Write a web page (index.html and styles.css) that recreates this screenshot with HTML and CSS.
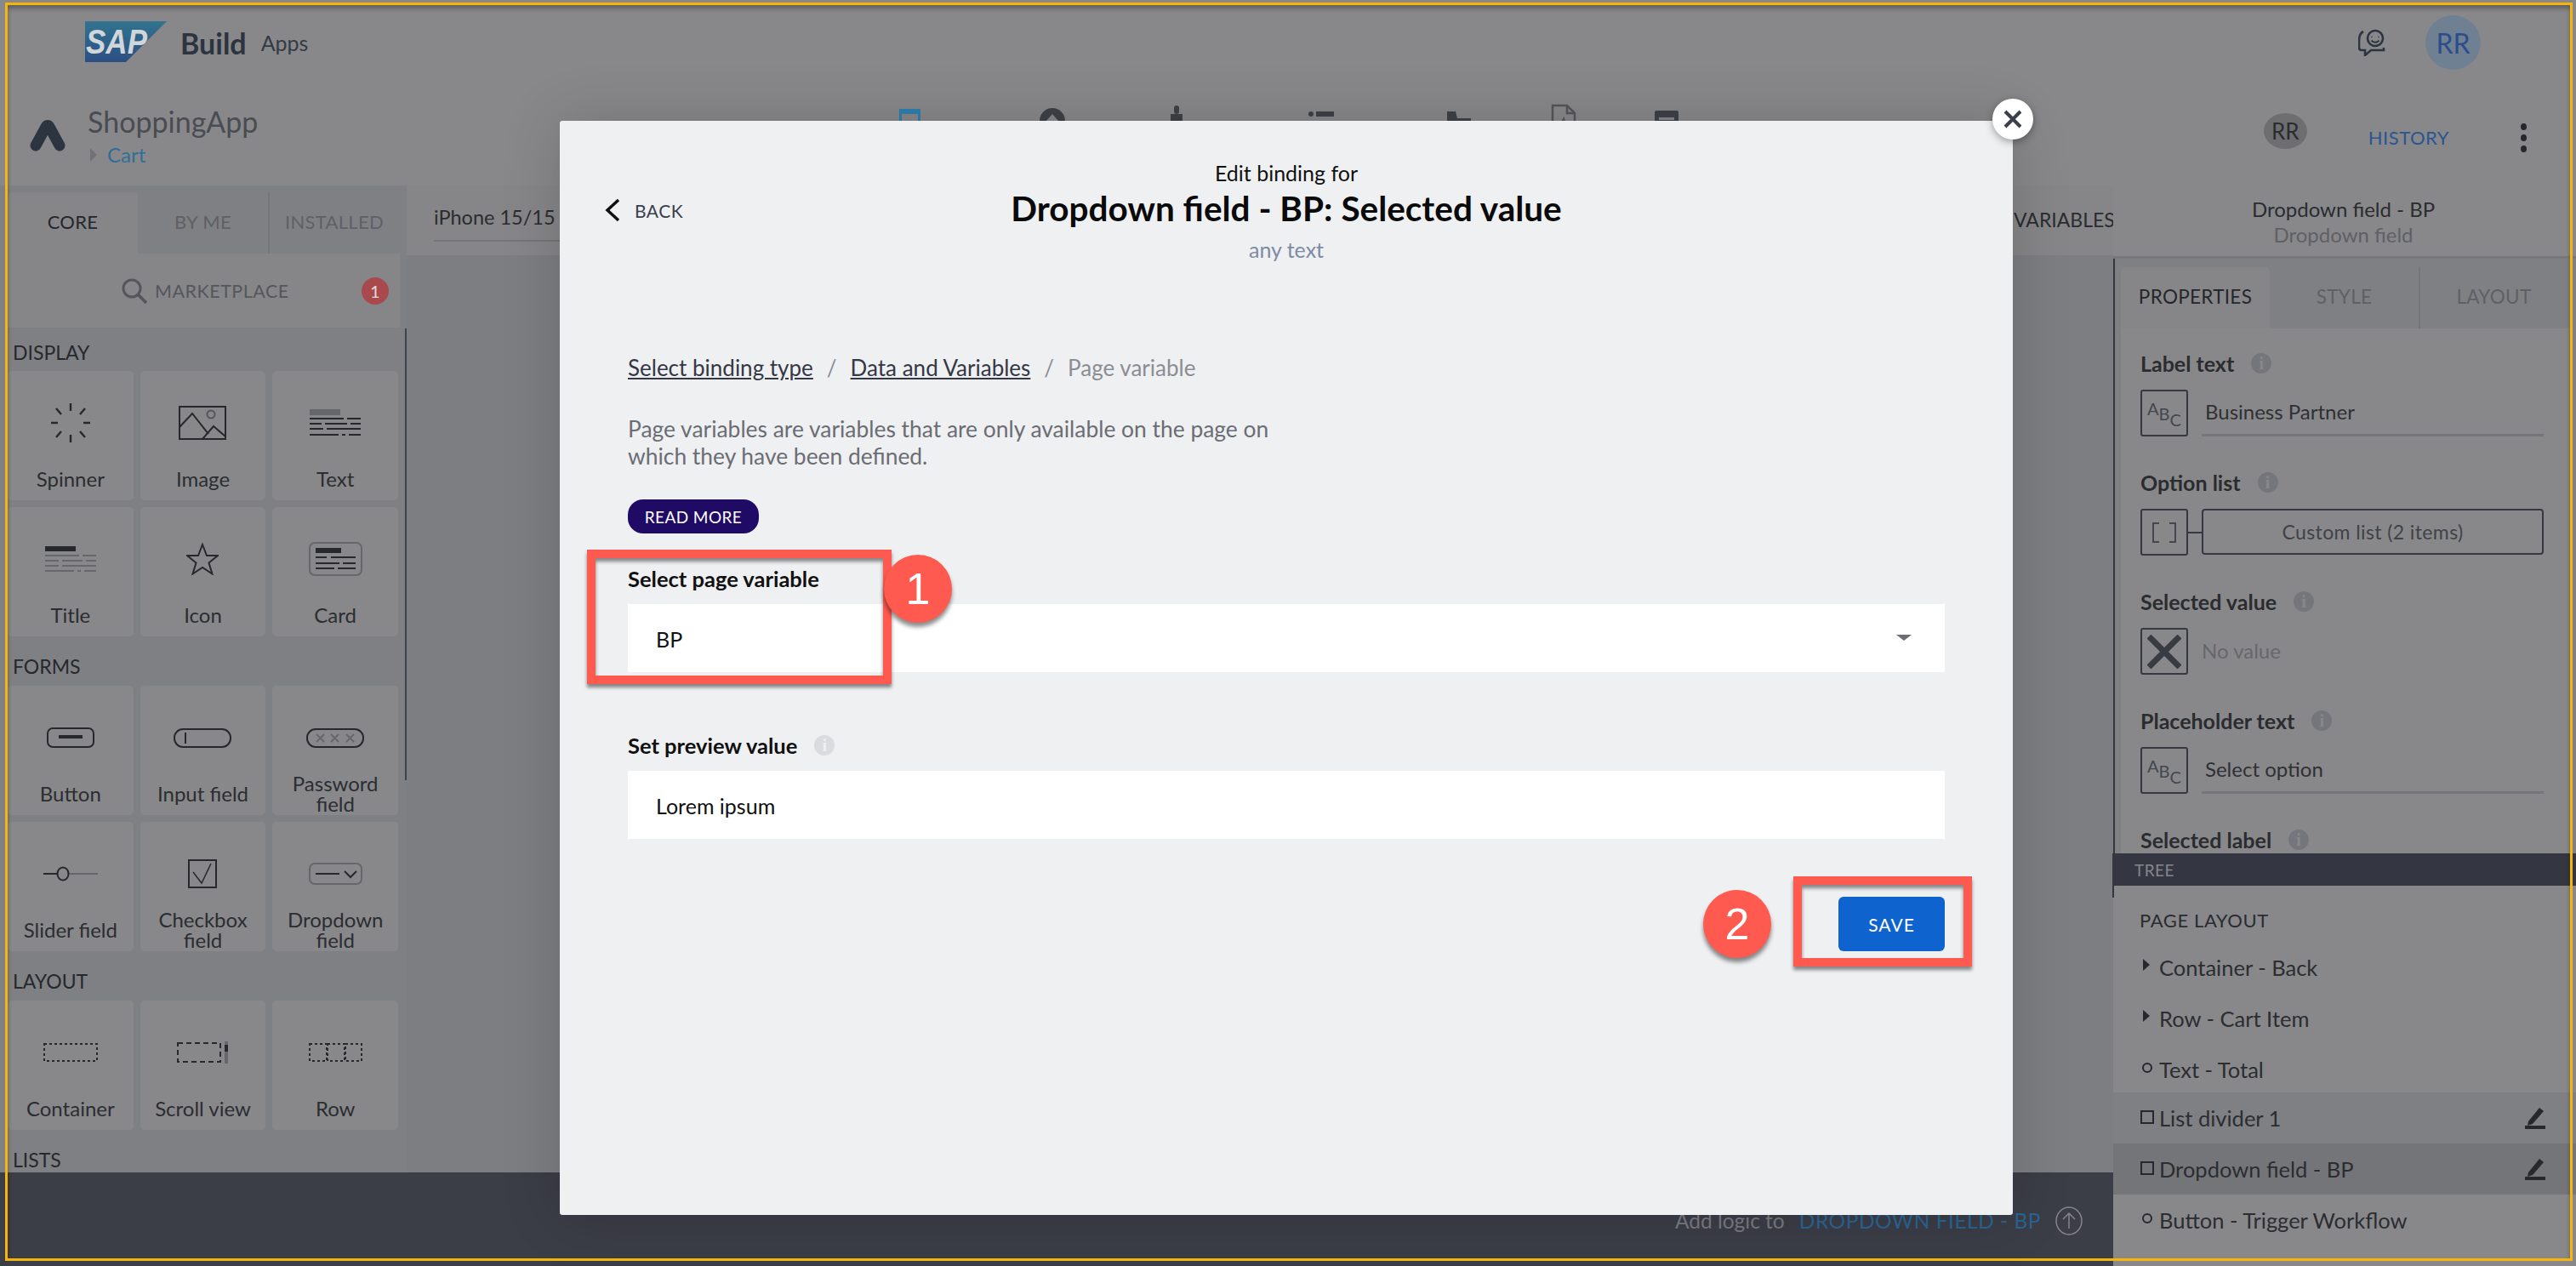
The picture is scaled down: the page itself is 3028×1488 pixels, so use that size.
FILE: index.html
```html
<!DOCTYPE html>
<html lang="en">
<head>
  <meta charset="UTF-8">
  <title>SAP Build Apps</title>
  <link rel="stylesheet" href="styles.css">
</head>
<body>
<div class="page">

  <!-- top bar -->
  <header class="topbar">
    <svg class="sap-logo" width="96" height="48" viewBox="0 0 96 48">
      <defs>
        <linearGradient id="sapGrad" x1="0" y1="0" x2="0" y2="1">
          <stop offset="0" stop-color="#31748f"/>
          <stop offset="1" stop-color="#2c4f83"/>
        </linearGradient>
      </defs>
      <polygon points="0,0 96,0 48,48 0,48" fill="url(#sapGrad)"/>
      <text x="1" y="38" class="sap-text" textLength="72" lengthAdjust="spacingAndGlyphs">SAP</text>
    </svg>
    <span class="build">Build</span>
    <span class="apps">Apps</span>
    <svg class="feedback" width="32" height="32" viewBox="0 0 32 32" fill="none" stroke="#2b3440" stroke-width="2.6">
      <circle cx="20" cy="11" r="9"/>
      <path d="M15.5 9.5h1M23.5 9.5h1M15.5 13.5c2 3 7 3 9 0" stroke-width="2"/>
      <path d="M6 3C2 5 1 8 1 14v8c0 2 1 3 3 3h4v6l7-6h15v-3"/>
    </svg>
    <div class="avatar-main">RR</div>
  </header>

  <!-- app row -->
  <div class="approw">
    <div class="brand">
      <svg width="44" height="38" viewBox="0 0 44 38" fill="none" stroke="#2b343f" stroke-width="13" stroke-linecap="round" stroke-linejoin="round">
        <path d="M8 31L20 9Q22 6 24 9L36 31"/>
      </svg>
      <div class="brand-text">
        <div class="app-name">ShoppingApp</div>
        <div class="app-page"><span class="page-arrow"></span>Cart</div>
      </div>
    </div>
    <div class="tools">
      <svg width="25" height="30" viewBox="0 0 25 30"><rect x="1.5" y="1.5" width="22" height="27" fill="none" stroke="#2f7fae" stroke-width="3"/><rect x="1" y="1" width="23" height="5" fill="#2f7fae"/><path d="M9 14h3v3H9zM14 14h3v3h-3z" fill="#2f7fae"/></svg>
      <svg width="30" height="32" viewBox="0 0 30 32"><circle cx="15" cy="16" r="15" fill="#3e4146"/><path d="M15 8l8 9h-5v7h-6v-7H7z" fill="#88888a"/></svg>
      <svg width="16" height="34" viewBox="0 0 16 34" fill="#3e4146"><rect x="5" y="0" width="6" height="10" rx="3"/><rect x="1" y="10" width="14" height="8"/><rect x="5" y="18" width="2" height="16"/><rect x="9" y="18" width="2" height="16"/></svg>
      <svg width="30" height="28" viewBox="0 0 30 28" fill="#3e4146"><circle cx="3" cy="4" r="3"/><rect x="9" y="1" width="21" height="6"/><circle cx="3" cy="15" r="3"/><rect x="9" y="12" width="21" height="6"/></svg>
      <svg width="30" height="28" viewBox="0 0 30 28" fill="#3e4146"><path d="M1 1h10l2 8h16v3H1zM1 15h29v13H1z"/></svg>
      <svg width="30" height="36" viewBox="0 0 30 36" fill="none" stroke="#55565a" stroke-width="2.5"><path d="M2 2h17l9 9v24H2z"/><path d="M19 2v9h9M9 30l6-12 4 12"/></svg>
      <svg width="28" height="28" viewBox="0 0 28 28" fill="#3e4146"><rect x="0" y="0" width="28" height="28" rx="2"/><rect x="5" y="8" width="18" height="3" fill="#88888a"/><rect x="5" y="15" width="18" height="3" fill="#88888a"/></svg>
    </div>
    <div class="app-actions">
      <div class="avatar-small">RR</div>
      <span class="history">HISTORY</span>
      <div class="kebab"><i></i><i></i><i></i></div>
    </div>
  </div>

  <div class="workspace">
    <div class="workspace-main">
      <div class="editor">

        <!-- left palette -->
        <aside class="palette">
          <div class="palette-tabs">
            <div class="ptab active">CORE</div>
            <div class="ptab">BY ME</div>
            <div class="ptab ptab-last">INSTALLED</div>
          </div>
          <div class="marketplace">
            <svg width="30" height="30" viewBox="0 0 30 30" fill="none" stroke="#55565b" stroke-width="3"><circle cx="12" cy="12" r="10"/><path d="M19 19l10 10" stroke-width="3.5"/></svg>
            <span class="market-text">MARKETPLACE</span>
            <span class="market-badge">1</span>
          </div>
          <div class="palette-scroll">
            <div class="group-label first">DISPLAY</div>
            <div class="cards">
              <div class="card">
                <div class="card-icon">
                  <svg width="46" height="46" viewBox="0 0 46 46" stroke="#26282c" stroke-width="2.4" fill="none"><path d="M23 0v9M23 37v9M0 23h8M38 23h8M6 6l6 7M40 6l-6 7M6 40l6-7M40 40l-6-7"/></svg>
                </div>
                <div class="card-label">Spinner</div>
              </div>
              <div class="card">
                <div class="card-icon">
                  <svg width="56" height="40" viewBox="0 0 56 40" fill="none" stroke="#26282c" stroke-width="2"><rect x="1" y="1" width="54" height="38"/><path d="M1 25L16 9l19 24M28 39l13-15 14 12"/><circle cx="38" cy="10" r="4.5" stroke="#55565a"/></svg>
                </div>
                <div class="card-label">Image</div>
              </div>
              <div class="card">
                <div class="card-icon">
                  <svg width="60" height="32" viewBox="0 0 60 32" fill="none" stroke="#26282c" stroke-width="2"><rect x="0" y="0" width="36" height="7" fill="#66676b" stroke="none"/><path d="M0 11h40M44 11h16M0 17h14M18 17h26M48 17h12M0 23h16M20 23h40M0 30h34M38 30h4M46 30h14"/></svg>
                </div>
                <div class="card-label">Text</div>
              </div>
              <div class="card">
                <div class="card-icon">
                  <svg width="60" height="30" viewBox="0 0 60 30" fill="none" stroke="#66676b" stroke-width="2"><rect x="0" y="0" width="36" height="6" fill="#26282c" stroke="none"/><path d="M0 11h40M44 11h16M0 17h16M20 17h24M48 17h12M0 23h16M20 23h40M0 29h34M38 29h4M46 29h14"/></svg>
                </div>
                <div class="card-label">Title</div>
              </div>
              <div class="card">
                <div class="card-icon">
                  <svg width="38" height="38" viewBox="0 0 38 38" fill="none" stroke="#26282c" stroke-width="2"><path d="M19 2l5 13h13l-10.500 8.500 4 13L19 29 7.500 36.500l4-13L1 15h13z"/></svg>
                </div>
                <div class="card-label">Icon</div>
              </div>
              <div class="card">
                <div class="card-icon">
                  <svg width="63" height="40" viewBox="0 0 63 40" fill="none" stroke="#26282c" stroke-width="2"><rect x="1" y="1" width="61" height="38" rx="6" stroke="#66676b"/><rect x="8" y="7" width="30" height="6" fill="#26282c" stroke="none"/><path d="M8 18h13M26 18h29M8 25h28M40 25h15M8 31h22M34 31h21"/></svg>
                </div>
                <div class="card-label">Card</div>
              </div>
            </div>

            <div class="group-label">FORMS</div>
            <div class="cards">
              <div class="card">
                <div class="card-icon">
                  <svg width="56" height="24" viewBox="0 0 56 24" fill="none" stroke="#26282c" stroke-width="2"><rect x="1" y="1" width="54" height="22" rx="6"/><rect x="14" y="9" width="28" height="4" fill="#26282c" stroke="none"/></svg>
                </div>
                <div class="card-label">Button</div>
              </div>
              <div class="card">
                <div class="card-icon">
                  <svg width="68" height="24" viewBox="0 0 68 24" fill="none" stroke="#26282c" stroke-width="2"><rect x="1" y="2" width="66" height="21" rx="10"/><path d="M14 6v13"/></svg>
                </div>
                <div class="card-label">Input field</div>
              </div>
              <div class="card">
                <div class="card-icon">
                  <svg width="68" height="24" viewBox="0 0 68 24" fill="none" stroke="#26282c" stroke-width="2"><rect x="1" y="2" width="66" height="21" rx="10"/><path d="M12 8l9 9M21 8l-9 9M29 8l9 9M38 8l-9 9M47 8l9 9M56 8l-9 9" stroke="#66676b"/></svg>
                </div>
                <div class="card-label">Password field</div>
              </div>
              <div class="card">
                <div class="card-icon">
                  <svg width="64" height="18" viewBox="0 0 64 18" fill="none" stroke="#26282c" stroke-width="2"><path d="M0 9h16"/><path d="M30 9h34" stroke="#66676b"/><ellipse cx="23" cy="9" rx="6.500" ry="7.500"/></svg>
                </div>
                <div class="card-label">Slider field</div>
              </div>
              <div class="card">
                <div class="card-icon">
                  <svg width="34" height="34" viewBox="0 0 34 34" fill="none" stroke="#26282c" stroke-width="2"><rect x="1" y="1" width="32" height="32"/><path d="M6 15l10 13L27 5" stroke-width="1.500"/></svg>
                </div>
                <div class="card-label">Checkbox field</div>
              </div>
              <div class="card">
                <div class="card-icon">
                  <svg width="63" height="26" viewBox="0 0 63 26" fill="none" stroke="#26282c" stroke-width="2"><rect x="1" y="1" width="61" height="24" rx="6" stroke="#66676b"/><path d="M8 13h28"/><path d="M42 10l7 7 7-7"/></svg>
                </div>
                <div class="card-label">Dropdown field</div>
              </div>
            </div>

            <div class="group-label">LAYOUT</div>
            <div class="cards">
              <div class="card">
                <div class="card-icon">
                  <svg width="64" height="22" viewBox="0 0 64 22" fill="none" stroke="#26282c" stroke-width="2" stroke-dasharray="3 3"><rect x="1" y="1" width="62" height="20"/></svg>
                </div>
                <div class="card-label">Container</div>
              </div>
              <div class="card">
                <div class="card-icon">
                  <svg width="60" height="26" viewBox="0 0 60 26" fill="none"><rect x="1" y="2" width="50" height="22" stroke="#26282c" stroke-width="2" stroke-dasharray="6 4"/><rect x="56" y="0" width="4" height="26" fill="#66676b"/><rect x="56" y="4" width="4" height="8" fill="#26282c"/></svg>
                </div>
                <div class="card-label">Scroll view</div>
              </div>
              <div class="card">
                <div class="card-icon">
                  <svg width="63" height="22" viewBox="0 0 63 22" fill="none" stroke="#26282c" stroke-width="2" stroke-dasharray="3 3"><rect x="1" y="1" width="20" height="20"/><rect x="22" y="1" width="20" height="20"/><rect x="43" y="1" width="19" height="20"/></svg>
                </div>
                <div class="card-label">Row</div>
              </div>
            </div>

            <div class="group-label">LISTS</div>
          </div>
          <div class="palette-rail"></div>
        </aside>

        <!-- canvas, mostly under the dialog -->
        <main class="canvas">
          <div class="canvas-bar">
            <div class="device">iPhone 15/15 Pro</div>
            <div class="variables">VARIABLES</div>
          </div>
        </main>
      </div>

      <footer class="logicbar">
        <span class="logic-add">Add logic to</span>
        <span class="logic-name">DROPDOWN FIELD - BP</span>
        <svg width="32" height="34" viewBox="0 0 32 34" fill="none" stroke="#85868b" stroke-width="1.500"><ellipse cx="16" cy="17" rx="15" ry="16"/><path d="M16 26V9M9 15l7-7 7 7"/></svg>
      </footer>
    </div>

    <!-- right panel -->
    <aside class="inspector">
      <div class="inspector-head">
        <div class="head-title">Dropdown field - BP</div>
        <div class="head-sub">Dropdown field</div>
      </div>
      <div class="inspector-body">
        <div class="itabs">
          <div class="itab active">PROPERTIES</div>
          <div class="itab">STYLE</div>
          <div class="itab itab-last">LAYOUT</div>
        </div>
        <div class="props">
          <div class="field">
            <div class="field-label">Label text <span class="info dim">i</span></div>
            <div class="field-row">
              <div class="bindbox abc"><span>A</span><span class="b">B</span><span class="c">C</span></div>
              <div class="field-value underlined">Business Partner</div>
            </div>
          </div>
          <div class="field">
            <div class="field-label">Option list <span class="info dim">i</span></div>
            <div class="field-row">
              <div class="bindbox">
                <svg width="30" height="24" viewBox="0 0 30 24" fill="none" stroke="#44474f" stroke-width="2"><path d="M9 1H2v22h7M21 1h7v22h-7"/></svg>
              </div>
              <div class="connector"></div>
              <div class="listbutton">Custom list (2 items)</div>
            </div>
          </div>
          <div class="field">
            <div class="field-label">Selected value <span class="info dim">i</span></div>
            <div class="field-row">
              <div class="bindbox">
                <svg width="40" height="40" viewBox="0 0 40 40" stroke="#383b44" stroke-width="7"><path d="M2 2l36 36M38 2L2 38"/></svg>
              </div>
              <div class="field-value novalue">No value</div>
            </div>
          </div>
          <div class="field">
            <div class="field-label">Placeholder text <span class="info dim">i</span></div>
            <div class="field-row">
              <div class="bindbox abc"><span>A</span><span class="b">B</span><span class="c">C</span></div>
              <div class="field-value underlined">Select option</div>
            </div>
          </div>
          <div class="field">
            <div class="field-label">Selected label <span class="info dim">i</span></div>
          </div>
        </div>
      </div>

      <div class="treebar">TREE</div>
      <div class="tree">
        <div class="tree-title">PAGE LAYOUT</div>
        <div class="tree-row"><span class="tri"></span>Container - Back</div>
        <div class="tree-row"><span class="tri"></span>Row - Cart Item</div>
        <div class="tree-row"><span class="dot"></span>Text - Total</div>
        <div class="tree-row hover"><span class="sq"></span>List divider 1
          <svg class="pen" width="24" height="26" viewBox="0 0 24 26" fill="#26282c"><path d="M4 17L17 1l5 4L9 20l-6 2z"/><rect y="22" width="24" height="4"/></svg>
        </div>
        <div class="tree-row selected"><span class="sq"></span>Dropdown field - BP
          <svg class="pen" width="24" height="26" viewBox="0 0 24 26" fill="#26282c"><path d="M4 17L17 1l5 4L9 20l-6 2z"/><rect y="22" width="24" height="4"/></svg>
        </div>
        <div class="tree-row"><span class="dot"></span>Button - Trigger Workflow</div>
      </div>
    </aside>
  </div>

  <!-- dialog -->
  <section class="modal">
    <div class="close">
      <svg width="24" height="24" viewBox="0 0 24 24" stroke="#3a3f4b" stroke-width="4"><path d="M3 3l18 18M21 3L3 21"/></svg>
    </div>
    <div class="modal-head">
      <div class="back">
        <svg width="18" height="28" viewBox="0 0 18 28" fill="none" stroke="#111" stroke-width="3.500"><path d="M16 2L3 14l13 12"/></svg>
        <span>BACK</span>
      </div>
      <div class="head-small">Edit binding for</div>
      <div class="head-big">Dropdown field - BP: Selected value</div>
      <div class="head-type">any text</div>
    </div>
    <div class="modal-body">
      <div class="crumbs">
        <a>Select binding type</a><span class="sep">/</span><a>Data and Variables</a><span class="sep">/</span><span class="crumb-now">Page variable</span>
      </div>
      <p class="desc">Page variables are variables that are only available on the page on<br>which they have been defined.</p>
      <div class="readmore">READ MORE</div>
      <div class="input-label first">Select page variable</div>
      <div class="input select">BP<span class="caret"></span></div>
      <div class="input-label second">Set preview value <span class="info light">i</span></div>
      <div class="input">Lorem ipsum</div>
      <div class="actions"><button class="save">SAVE</button></div>
    </div>
  </section>

  <!-- tutorial callouts -->
  <div class="callout callout-one"></div>
  <div class="badge badge-one">1</div>
  <div class="callout callout-two"></div>
  <div class="badge badge-two">2</div>

  <div class="frame"></div>
</div>
</body>
</html>
```
FILE: styles.css
```css
* {
  box-sizing: border-box;
}

html, body {
  margin: 0;
  padding: 0;
}

body {
  font-family: "Lato", "Liberation Sans", sans-serif;
  color: #2a2c30;
  background: #88888a;
}

.page {
  position: relative;
  width: 3028px;
  height: 1488px;
  overflow: hidden;
  background: #88888a;
  display: flex;
  flex-direction: column;
}

/* top bar */
.topbar {
  height: 100px;
  display: flex;
  align-items: center;
  padding: 0 112px 0 100px;
  flex-shrink: 0;
}

.sap-logo {
  margin-top: -2px;
}

.sap-text {
  font-family: "Liberation Sans", sans-serif;
  font-weight: bold;
  font-style: italic;
  font-size: 41px;
  fill: #d0d6da;
}

.build {
  margin-left: 16px;
  font-size: 34px;
  font-weight: 700;
  color: #2b343f;
}

.apps {
  margin-left: 17px;
  font-size: 25px;
  color: #343a44;
}

.feedback {
  margin-left: auto;
  margin-right: 47px;
}

.avatar-main {
  width: 65px;
  height: 64px;
  border-radius: 50%;
  background: #6f8092;
  color: #2b4d8c;
  font-size: 32px;
  display: flex;
  align-items: center;
  justify-content: center;
}

/* app row */
.approw {
  height: 118px;
  display: grid;
  grid-template-columns: 1057px 1fr auto;
  flex-shrink: 0;
}

.brand {
  display: flex;
  padding: 40px 0 0 34px;
}

.brand-text {
  margin: -16px 0 0 25px;
}

.app-name {
  font-size: 34px;
  line-height: 38px;
  color: #4a4c52;
}

.app-page {
  margin-top: 5px;
  font-size: 24px;
  line-height: 30px;
  color: #2f6f99;
  display: flex;
  align-items: center;
}

.page-arrow {
  width: 0;
  height: 0;
  margin: 0 12px 0 3px;
  border-left: 8px solid #717276;
  border-top: 8px solid transparent;
  border-bottom: 8px solid transparent;
}

.tools {
  display: grid;
  grid-template-columns: 165px 153px 163px 162px 123px 122px 30px;
  align-items: end;
  height: 58px;
}

.app-actions {
  display: flex;
  align-items: center;
  height: 118px;
  padding: 4px 58px 0 0;
}

.avatar-small {
  width: 51px;
  height: 42px;
  margin-bottom: 14px;
  border-radius: 50%;
  background: #6e6e70;
  font-size: 26px;
  display: flex;
  align-items: center;
  justify-content: center;
}

.history {
  margin-left: 72px;
  font-size: 22px;
  letter-spacing: 0.5px;
  color: #2a5590;
}

.kebab {
  margin-left: 84px;
  display: flex;
  flex-direction: column;
  gap: 5px;
  padding-top: 2px;
}

.kebab i {
  width: 7px;
  height: 8px;
  border-radius: 50%;
  background: #25272c;
}

/* main area */
.workspace {
  flex: 1;
  display: flex;
  min-height: 0;
}

.workspace-main {
  width: 2484px;
  display: flex;
  flex-direction: column;
}

.editor {
  height: 1160px;
  display: flex;
}

/* palette */
.palette {
  position: relative;
  width: 478px;
  background: #7f8084;
  display: flex;
  flex-direction: column;
  padding-left: 9px;
  overflow: hidden;
}

.palette-rail {
  position: absolute;
  left: 476px;
  top: 168px;
  width: 2px;
  height: 531px;
  background: #3d4450;
}

.palette-tabs {
  display: flex;
  height: 80px;
  padding-top: 8px;
  flex-shrink: 0;
}

.ptab {
  width: 153px;
  padding-bottom: 4px;
  font-size: 22px;
  color: #5f6065;
  letter-spacing: 0.3px;
  display: flex;
  align-items: center;
  justify-content: center;
}

.ptab.active {
  background: #868688;
  color: #25272c;
  border-radius: 5px 5px 0 0;
}

.ptab-last {
  border-left: 2px solid #75767a;
  width: 160px;
  padding-right: 6px;
}

.marketplace {
  width: 461px;
  height: 87px;
  background: #868688;
  display: flex;
  align-items: center;
  padding-left: 134px;
  flex-shrink: 0;
}

.market-text {
  margin-left: 9px;
  font-size: 21.5px;
  color: #55565b;
  letter-spacing: 0.5px;
}

.market-badge {
  margin-left: 85px;
  width: 32px;
  height: 32px;
  border-radius: 50%;
  background: #a8494d;
  color: #e4d9da;
  font-size: 20px;
  display: flex;
  align-items: center;
  justify-content: center;
}

.palette-scroll {
  flex: 1;
  width: 459px;
}

.group-label {
  height: 58px;
  padding: 12px 0 0 6px;
  font-size: 23px;
  color: #26282c;
  display: flex;
  align-items: center;
}

.group-label.first {
  height: 51px;
  padding-top: 7px;
}

.cards {
  display: grid;
  grid-template-columns: repeat(3, 1fr);
  gap: 8px;
}

.card {
  height: 152px;
  background: #88888a;
  border-radius: 5px;
  display: grid;
  grid-template-rows: 101px 51px;
}

.card-icon {
  padding-top: 20px;
  display: flex;
  align-items: center;
  justify-content: center;
}

.card-label {
  padding: 0 8px;
  font-size: 24px;
  line-height: 24px;
  text-align: center;
  color: #2b2d31;
  display: flex;
  align-items: center;
  justify-content: center;
}

/* canvas */
.canvas {
  flex: 1;
  background: #7d7e82;
}

.canvas-bar {
  height: 82px;
  background: #868688;
  display: flex;
  justify-content: space-between;
  padding-left: 32px;
}

.device {
  width: 300px;
  height: 66px;
  display: flex;
  align-items: center;
  padding-top: 10px;
  font-size: 23.5px;
  border-bottom: 2px solid #747579;
}

.variables {
  width: 117px;
  padding-top: 26px;
  font-size: 23px;
  color: #2a2c30;
  white-space: nowrap;
}

/* bottom bar */
.logicbar {
  flex: 1;
  background: #3b3d47;
  display: flex;
  justify-content: flex-end;
  align-items: flex-start;
  padding: 40px 36px 0 0;
}

.logic-add {
  font-size: 24.5px;
  line-height: 34px;
  color: #797a80;
}

.logic-name {
  margin: 0 17px;
  font-size: 24.5px;
  line-height: 34px;
  letter-spacing: 0.5px;
  color: #2b6491;
}

/* right panel */
.inspector {
  flex: 1;
  display: flex;
  flex-direction: column;
  min-width: 0;
  background: #88888a;
}

.inspector-head {
  height: 86px;
  text-align: center;
  padding: 13px 3px 0 0;
  border-bottom: 3px solid #77787c;
  flex-shrink: 0;
}

.head-title {
  font-size: 24px;
  line-height: 30px;
}

.head-sub {
  font-size: 24px;
  line-height: 30px;
  color: #5f6065;
}

.inspector-body {
  height: 699px;
  border-left: 2px solid #33363f;
  background: #7f8084;
  padding: 10px 8px 0 7px;
  display: flex;
  flex-direction: column;
  overflow: hidden;
  flex-shrink: 0;
}

.itabs {
  display: flex;
  height: 72px;
  flex-shrink: 0;
}

.itab {
  width: 175px;
  padding-bottom: 4px;
  font-size: 22.5px;
  letter-spacing: 0.3px;
  color: #5f6065;
  display: flex;
  align-items: center;
  justify-content: center;
}

.itab.active {
  background: #868688;
  color: #25272c;
  border-radius: 5px 5px 0 0;
}

.itab-last {
  border-left: 2px solid #75767a;
}

.props {
  flex: 1;
  background: #88888a;
  padding: 27px 30px 0 23px;
  overflow: hidden;
}

.field {
  height: 140px;
}

.field-label {
  height: 28px;
  font-size: 25px;
  line-height: 28px;
  font-weight: 700;
  color: #2a2c30;
  display: flex;
  align-items: center;
  gap: 20px;
}

.info {
  width: 24px;
  height: 24px;
  border-radius: 50%;
  font-family: "Liberation Serif", serif;
  font-size: 20px;
  font-weight: 700;
  display: inline-flex;
  align-items: center;
  justify-content: center;
}

.info.dim {
  background: #75767b;
  color: #88888a;
}

.info.light {
  background: #d9dbdf;
  color: #eff0f2;
}

.field-row {
  margin-top: 17px;
  height: 55px;
  display: flex;
}

.bindbox {
  width: 56px;
  height: 55px;
  border: 2px solid #363942;
  border-radius: 3px;
  font-size: 24px;
  color: #44474f;
  display: flex;
  align-items: center;
  justify-content: center;
  flex-shrink: 0;
}

.abc span {
  font-size: 20px;
  line-height: 1;
  margin-top: -11px;
}

.abc .b {
  margin-top: 1px;
}

.abc .c {
  margin-top: 14px;
}

.connector {
  width: 16px;
  height: 2px;
  margin-top: 27px;
  background: #363942;
}

.listbutton {
  flex: 1;
  height: 54px;
  border: 2px solid #363942;
  border-radius: 4px;
  font-size: 23px;
  letter-spacing: 0.4px;
  color: #3f4249;
  display: flex;
  align-items: center;
  justify-content: center;
}

.field-value {
  flex: 1;
  margin-left: 16px;
  font-size: 24px;
  color: #2e3035;
  padding: 11px 0 0 4px;
}

.underlined {
  border-bottom: 3px solid #75767b;
}

.novalue {
  padding: 12px 0 0 0;
  color: #66676c;
}

/* tree */
.treebar {
  height: 38px;
  margin-left: -1px;
  padding-left: 26px;
  background: #343741;
  color: #85868c;
  font-size: 19px;
  letter-spacing: 0.5px;
  display: flex;
  align-items: center;
  flex-shrink: 0;
}

.tree {
  flex: 1;
  position: relative;
  padding-top: 25px;
}

.tree::before {
  content: "";
  position: absolute;
  left: -1px;
  top: 0;
  width: 2px;
  height: 14px;
  background: #33363f;
}

.tree-title {
  height: 32px;
  padding-left: 31px;
  font-size: 22px;
  line-height: 32px;
  letter-spacing: 0.6px;
  color: #2a2c30;
  margin-bottom: 9px;
}

.tree-row {
  height: 60px;
  padding: 0 36px 0 32px;
  font-size: 25.5px;
  color: #2b2d31;
  display: flex;
  align-items: center;
}

.tree-row.hover {
  background: #7f8084;
  margin-top: -3px;
}

.tree-row.selected {
  background: #747579;
}

.tri {
  width: 0;
  height: 0;
  margin: -6px 11px 0 3px;
  border-left: 8px solid #26282c;
  border-top: 7px solid transparent;
  border-bottom: 7px solid transparent;
}

.dot {
  width: 12px;
  height: 12px;
  margin: -4px 8px 0 2px;
  border: 2px solid #26282c;
  border-radius: 50%;
}

.sq {
  width: 16px;
  height: 16px;
  margin: -2px 6px 0 0;
  border: 2px solid #26282c;
}

.pen {
  margin-left: auto;
}

/* dialog */
.modal {
  position: absolute;
  left: 658px;
  top: 142px;
  width: 1708px;
  height: 1286px;
  background: #eff0f2;
  border-radius: 3px;
  box-shadow: 0 0 70px rgba(0, 0, 0, 0.16);
  display: flex;
  flex-direction: column;
}

.close {
  position: absolute;
  right: -24px;
  top: -26px;
  width: 48px;
  height: 48px;
  border-radius: 50%;
  background: #fff;
  box-shadow: 0 3px 10px rgba(0, 0, 0, 0.35);
  display: flex;
  align-items: center;
  justify-content: center;
}

.modal-head {
  position: relative;
  padding-top: 46px;
  text-align: center;
}

.back {
  position: absolute;
  left: 53px;
  top: 91px;
  display: flex;
  align-items: center;
  gap: 17px;
  font-size: 21px;
  letter-spacing: 0.5px;
  color: #3a3f4b;
}

.head-small {
  font-size: 25px;
  line-height: 30px;
  color: #111;
}

.head-big {
  margin-top: 2px;
  font-size: 40.5px;
  line-height: 50px;
  font-weight: 700;
  color: #0a0a0a;
}

.head-type {
  margin-top: 8px;
  font-size: 25px;
  line-height: 30px;
  color: #7f8ba5;
}

.modal-body {
  padding: 108px 80px 0;
  display: flex;
  flex-direction: column;
}

.crumbs {
  height: 32px;
  font-size: 26px;
  line-height: 32px;
  color: #343844;
  white-space: nowrap;
}

.crumbs a {
  text-decoration: underline;
}

.sep {
  margin: 0 16px;
  color: #8b8d94;
}

.crumb-now {
  color: #8b8d94;
}

.desc {
  margin: 40px 0 0;
  font-size: 26.4px;
  line-height: 32px;
  color: #6b6d74;
}

.readmore {
  margin-top: 35px;
  width: 154px;
  height: 40px;
  border-radius: 18px;
  background: #1f0a66;
  color: #fff;
  font-size: 19px;
  letter-spacing: 0.4px;
  display: flex;
  align-items: center;
  justify-content: center;
}

.input-label {
  height: 28px;
  font-size: 25.5px;
  line-height: 28px;
  font-weight: 700;
  color: #111;
  display: flex;
  align-items: center;
  gap: 20px;
}

.input-label.first {
  margin-top: 39px;
}

.input-label.second {
  margin-top: 72px;
}

.input {
  position: relative;
  margin-top: 16px;
  height: 80px;
  background: #fff;
  padding: 2px 0 0 33px;
  font-size: 25px;
  color: #111;
  display: flex;
  align-items: center;
}

.caret {
  position: absolute;
  right: 39px;
  top: 36px;
  border-top: 7px solid #6b6d74;
  border-left: 9px solid transparent;
  border-right: 9px solid transparent;
}

.actions {
  margin-top: 68px;
  display: flex;
  justify-content: flex-end;
}

.save {
  width: 125px;
  height: 64px;
  border: 0;
  border-radius: 6px;
  background: #0f63ce;
  color: #fff;
  font-family: inherit;
  font-size: 21px;
  letter-spacing: 1px;
}

/* tutorial callouts, drawn over the screenshot */
.callout {
  position: absolute;
  border: 10px solid #ff5a4f;
  box-shadow: 0 4px 4px rgba(0, 0, 0, 0.45), inset 0 4px 4px rgba(0, 0, 0, 0.45);
}

.callout-one {
  left: 690px;
  top: 646px;
  width: 358px;
  height: 158px;
}

.callout-two {
  left: 2108px;
  top: 1030px;
  width: 210px;
  height: 106px;
}

.badge {
  position: absolute;
  width: 80px;
  height: 80px;
  border-radius: 50%;
  background: #ff5a4f;
  color: #fff;
  font-family: "Liberation Sans", sans-serif;
  font-size: 52px;
  display: flex;
  align-items: center;
  justify-content: center;
  box-shadow: 0 5px 5px rgba(0, 0, 0, 0.45);
}

.badge-one {
  left: 1039px;
  top: 652px;
}

.badge-two {
  left: 2002px;
  top: 1046px;
}

.frame {
  position: absolute;
  left: 6px;
  top: 3px;
  width: 3018px;
  height: 1479px;
  border: 3px solid #f5b50c;
  box-shadow: inset 0 4px 5px rgba(0, 0, 0, 0.3);
  pointer-events: none;
}
```
